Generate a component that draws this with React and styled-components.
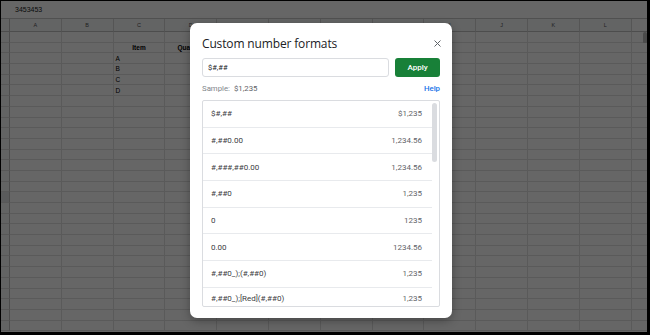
import styled, { createGlobalStyle } from 'styled-components';

const GlobalStyle = createGlobalStyle`
  html, body {
    margin: 0;
    padding: 0;
    background: #000;
  }
  * {
    box-sizing: border-box;
  }
`;

const columns = ['A', 'B', 'C', 'D', 'E', 'F', 'G', 'H', 'I', 'J', 'K', 'L'];

const cells = {
  1: { C: { text: 'Item', bold: true, center: true }, D: { text: 'Qua', bold: true, right: true } },
  2: { C: { text: 'A' } },
  3: { C: { text: 'B' } },
  4: { C: { text: 'C' } },
  5: { C: { text: 'D' } },
};

const formats = [
  ['$#,##', '$1,235'],
  ['#,##0.00', '1,234.56'],
  ['#,###,##0.00', '1,234.56'],
  ['#,##0', '1,235'],
  ['0', '1235'],
  ['0.00', '1234.56'],
  ['#,##0_);(#,##0)', '1,235'],
  ['#,##0_);[Red](#,##0)', '1,235'],
];

const App = () => {
  const rows = Array.from({ length: 28 }, (_, i) => i);

  return (
    <>
      <GlobalStyle />
      <Frame>
        <Sheet>
          <FormulaBar>3453453</FormulaBar>
          <Grid>
            <Corner />
            {columns.map((c) => (
              <ColHeader key={c}>{c}</ColHeader>
            ))}
            <ScrollCol $head />
            {rows.map((r) => (
              <Row key={r}>
                <RowHeader $selected={r === 15} />
                {columns.map((c) => {
                  const cell = cells[r] && cells[r][c];
                  return (
                    <Cell key={c} $bold={cell && cell.bold} $center={cell && cell.center}>
                      {cell ? cell.text : ''}
                    </Cell>
                  );
                })}
                <ScrollCol>{r === 0 && <ScrollThumb />}</ScrollCol>
              </Row>
            ))}
          </Grid>

          <Overlay />

          <Dialog>
            <Header>
              <Title>Custom number formats</Title>
              <CloseButton aria-label="Close">
                <svg width="7" height="7" viewBox="0 0 7 7">
                  <path d="M0.5 0.5 L6.5 6.5 M6.5 0.5 L0.5 6.5" stroke="#5f6368" strokeWidth="1" />
                </svg>
              </CloseButton>
            </Header>

            <InputRow>
              <FormatInput defaultValue="$#,##" />
              <ApplyButton>Apply</ApplyButton>
            </InputRow>

            <SampleRow>
              <Sample>
                Sample: <strong>$1,235</strong>
              </Sample>
              <HelpLink href="#">Help</HelpLink>
            </SampleRow>

            <FormatList>
              <FormatItems>
                {formats.map(([fmt, value]) => (
                  <FormatItem key={fmt}>
                    <span>{fmt}</span>
                    <FormatValue>{value}</FormatValue>
                  </FormatItem>
                ))}
              </FormatItems>
              <ListScroll>
                <ListThumb />
              </ListScroll>
            </FormatList>
          </Dialog>
        </Sheet>
      </Frame>
    </>
  );
};

const Frame = styled.div`
  width: 650px;
  height: 335px;
  padding: 1px 3px 3px 1px;
  background: #000;
  overflow: hidden;
`;

const Sheet = styled.div`
  position: relative;
  width: 100%;
  height: 100%;
  overflow: hidden;
  background: #fff;
  font-family: 'Liberation Sans', Arial, sans-serif;
`;

const FormulaBar = styled.div`
  height: 18px;
  padding-left: 14px;
  display: flex;
  align-items: center;
  font-size: 7px;
  color: #222;
  background: #fff;
  border-bottom: 1px solid #c7c7c7;
`;

const Grid = styled.div`
  display: grid;
  grid-template-columns: 9px repeat(12, 51.8px) 1fr;
  grid-auto-rows: 10.7px;
  grid-template-rows: 13px;
`;

const Row = styled.div`
  display: contents;
`;

const Corner = styled.div`
  background: #f8f9fa;
  border-right: 1px solid #c0c0c0;
  border-bottom: 1px solid #c0c0c0;
`;

const ColHeader = styled.div`
  display: flex;
  align-items: center;
  justify-content: center;
  font-size: 5.5px;
  color: #555;
  background: #f8f9fa;
  border-right: 1px solid #d5d5d5;
  border-bottom: 1px solid #c0c0c0;
`;

const RowHeader = styled.div`
  background: ${(p) => (p.$selected ? '#e1e3e6' : '#f8f9fa')};
  border-right: 1px solid #c0c0c0;
  border-bottom: 1px solid #dcdcdc;
`;

const Cell = styled.div`
  display: flex;
  align-items: center;
  justify-content: ${(p) => (p.$center ? 'center' : 'flex-start')};
  padding-left: ${(p) => (p.$center ? '0' : '2px')};
  font-size: 6.5px;
  font-weight: ${(p) => (p.$bold ? 700 : 400)};
  color: #000;
  white-space: nowrap;
  overflow: hidden;
  border-right: 1px solid #e2e2e2;
  border-bottom: 1px solid #e2e2e2;

  &:nth-child(5) {
    padding-left: 12px;
  }
`;

const ScrollCol = styled.div`
  position: relative;
  background: #fff;
  border-bottom: ${(p) => (p.$head ? '1px solid #c0c0c0' : '1px solid #e2e2e2')};
`;

const ScrollThumb = styled.div`
  position: absolute;
  right: 0;
  top: 0;
  width: 4px;
  height: 12px;
  border-radius: 2px;
  background: #bdbdbd;
`;

const Overlay = styled.div`
  position: absolute;
  inset: 0;
  background: rgba(0, 0, 0, 0.6);
`;

const Dialog = styled.div`
  position: absolute;
  left: 189px;
  top: 22px;
  width: 262px;
  height: 295px;
  padding: 11px 12px 11px 12px;
  display: flex;
  flex-direction: column;
  background: #fff;
  border-radius: 7px;
  box-shadow: 0 3px 10px rgba(0, 0, 0, 0.3);
  font-family: Roboto, 'Liberation Sans', sans-serif;
`;

const Header = styled.div`
  display: flex;
  align-items: center;
  justify-content: space-between;
  height: 18px;
  margin-bottom: 6px;
`;

const Title = styled.h2`
  margin: 0;
  font-family: 'Open Sans', Roboto, sans-serif;
  font-size: 12px;
  font-weight: 400;
  color: #202124;
  letter-spacing: -0.15px;
`;

const CloseButton = styled.button`
  display: flex;
  align-items: center;
  justify-content: center;
  width: 14px;
  height: 14px;
  padding: 0;
  margin-right: -4px;
  border: none;
  background: none;
`;

const InputRow = styled.div`
  display: flex;
  gap: 6px;
  height: 19px;
`;

const FormatInput = styled.input`
  flex: 1;
  min-width: 0;
  height: 100%;
  padding: 0 5px;
  font-family: Roboto, sans-serif;
  font-size: 7.5px;
  color: #202124;
  border: 1px solid #dadce0;
  border-radius: 3px;
  outline: none;
`;

const ApplyButton = styled.button`
  width: 45px;
  height: 100%;
  padding: 0;
  border: none;
  border-radius: 3px;
  background: #188038;
  color: #fff;
  font-family: Roboto, sans-serif;
  font-size: 8px;
  font-weight: 500;
`;

const SampleRow = styled.div`
  display: flex;
  align-items: center;
  justify-content: space-between;
  height: 23px;
`;

const Sample = styled.span`
  font-size: 7.8px;
  color: #80868b;

  strong {
    font-weight: 400;
    color: #5f6368;
    margin-left: 2px;
  }
`;

const HelpLink = styled.a`
  font-size: 7.8px;
  font-weight: 500;
  color: #1a73e8;
  text-decoration: none;
`;

const FormatList = styled.div`
  flex: 0 0 207px;
  display: flex;
  overflow: hidden;
  border: 1px solid #dadce0;
  border-radius: 2px;
`;

const FormatItems = styled.ul`
  flex: 1;
  margin: 0;
  padding: 0;
  list-style: none;
`;

const FormatItem = styled.li`
  display: flex;
  align-items: center;
  justify-content: space-between;
  height: 26.7px;
  padding: 0 10px 0 8px;
  font-size: 8px;
  color: #3c4043;
  border-bottom: 1px solid #e8eaed;

  &:last-child {
    height: 19px;
    padding-top: 2px;
    border-bottom: none;
  }
`;

const FormatValue = styled.span`
  color: #5f6368;
`;

const ListScroll = styled.div`
  width: 6px;
  padding-top: 2px;
  margin-right: 1px;
`;

const ListThumb = styled.div`
  width: 5px;
  height: 59px;
  border-radius: 3px;
  background: #dadce0;
`;

export default App;
